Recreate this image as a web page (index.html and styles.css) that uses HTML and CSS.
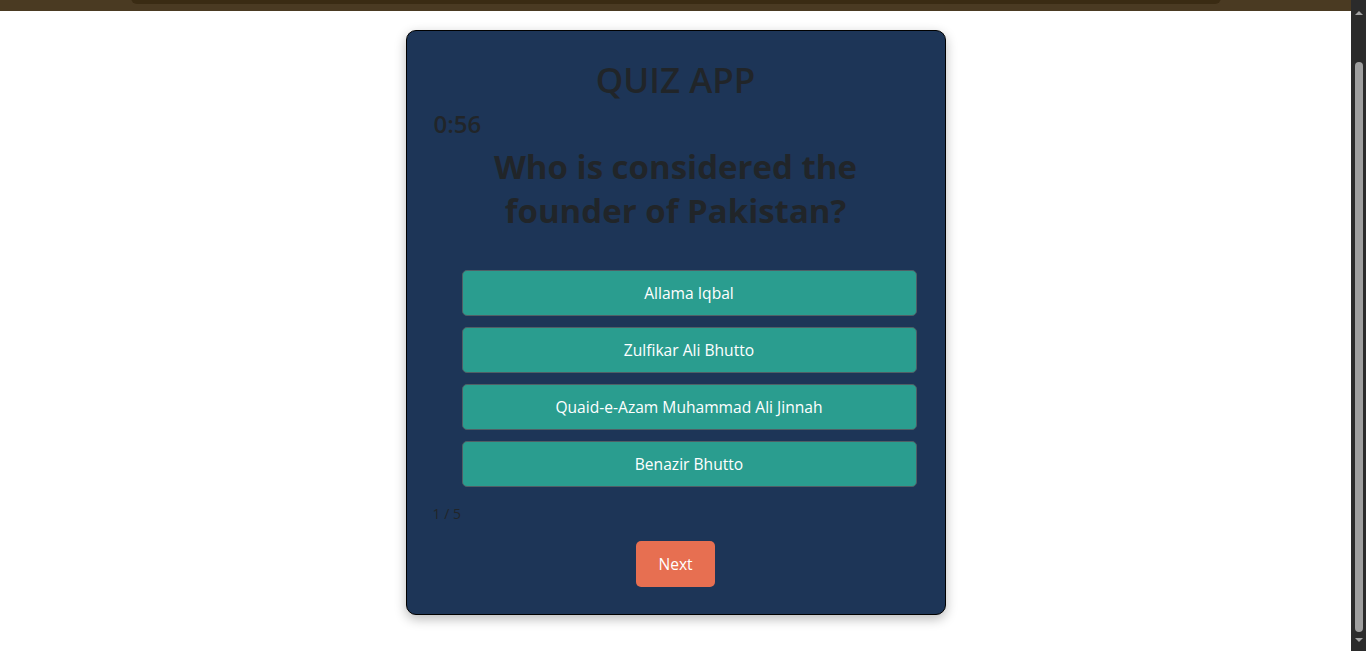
FILE: index.html
```html
<!DOCTYPE html>
<html lang="en">
<head>
<meta charset="utf-8">
<title>Quiz App</title>
<link rel="stylesheet" href="styles.css">
</head>
<body>
<div class="page">
  <header class="topbar">
    <div class="topbar-inner"></div>
  </header>
  <main class="quiz-card">
    <h1 class="quiz-title">QUIZ APP</h1>
    <div class="timer">0:56</div>
    <h2 class="question">Who is considered the founder of Pakistan?</h2>
    <div class="options">
      <button class="option">Allama Iqbal</button>
      <button class="option">Zulfikar Ali Bhutto</button>
      <button class="option">Quaid-e-Azam Muhammad Ali Jinnah</button>
      <button class="option">Benazir Bhutto</button>
    </div>
    <div class="progress">1 / 5</div>
    <div class="actions">
      <button class="next-btn">Next</button>
    </div>
  </main>
</div>
<div class="scrollbar" aria-hidden="true">
  <span class="sb-arrow sb-up"></span>
  <span class="sb-thumb"></span>
  <span class="sb-arrow sb-down"></span>
</div>
<script src="script.js"></script>
</body>
</html>
```
FILE: styles.css
```css
html {
  background: #ffffff;
}
body {
  margin: 0;
  background: #ffffff;
  color: #212529;
  font-family: "Open Sans", "Noto Sans", sans-serif;
}
.page {
  margin-right: 15px;
}
.topbar {
  height: 67px;
  box-sizing: border-box;
  padding-bottom: 7px;
  background: #4a3a22;
  display: flex;
  align-items: flex-end;
  justify-content: center;
}
.topbar-inner {
  width: 1090px;
  height: 40px;
  background: #3a2b13;
  border-radius: 0 0 6px 6px;
}
.quiz-card {
  width: 540px;
  box-sizing: border-box;
  margin: 19px auto 36px;
  padding: 25px 25px 27px;
  background: #1d3557;
  border: 1px solid #000;
  border-radius: 10px;
  box-shadow: 0 4px 12px rgba(0, 0, 0, 0.28);
  color: #212529;
}
.quiz-title {
  margin: 0;
  font-size: 35px;
  line-height: 48px;
  font-weight: 600;
  text-align: center;
}
.timer {
  margin-top: 4px;
  padding-left: 2px;
  font-size: 24px;
  line-height: 32px;
  font-weight: 600;
}
.question {
  margin: 5px 0 0;
  padding: 0 20px;
  font-size: 33px;
  line-height: 44px;
  font-weight: 700;
  text-align: center;
}
.options {
  margin: 37px 3px 0 30px;
  display: flex;
  flex-direction: column;
  gap: 11px;
}
.option {
  height: 46px;
  margin: 0;
  padding: 0 12px;
  background: #2a9d8f;
  color: #ffffff;
  border: 1px solid #4f5f66;
  border-radius: 5px;
  font-family: inherit;
  font-size: 15.6px;
  cursor: pointer;
}
.progress {
  margin-top: 17px;
  padding-left: 1px;
  font-size: 14px;
  line-height: 19px;
}
.actions {
  margin-top: 18px;
  display: flex;
  justify-content: center;
}
.next-btn {
  height: 46px;
  padding: 0 22px;
  margin: 0;
  background: #e76f51;
  color: #ffffff;
  border: none;
  border-radius: 5px;
  font-family: inherit;
  font-size: 15.6px;
  cursor: pointer;
}
.scrollbar {
  position: fixed;
  top: 0;
  right: 0;
  bottom: 0;
  width: 15px;
  background: #2b2b2b;
  display: flex;
  flex-direction: column;
  align-items: center;
  justify-content: space-between;
  padding: 11px 0 9px;
  box-sizing: border-box;
}
.sb-arrow {
  width: 0;
  height: 0;
  border-left: 4px solid transparent;
  border-right: 4px solid transparent;
}
.sb-up {
  border-bottom: 4px solid #a3a3a3;
}
.sb-down {
  border-top: 4px solid #a3a3a3;
}
.sb-thumb {
  width: 8px;
  height: 570px;
  margin-top: 36px;
  margin-bottom: -4px;
  background: #9f9f9f;
  border-radius: 4px;
}
```
FILE: script.js
```js
window.scrollTo(0, document.documentElement.scrollHeight);
```
